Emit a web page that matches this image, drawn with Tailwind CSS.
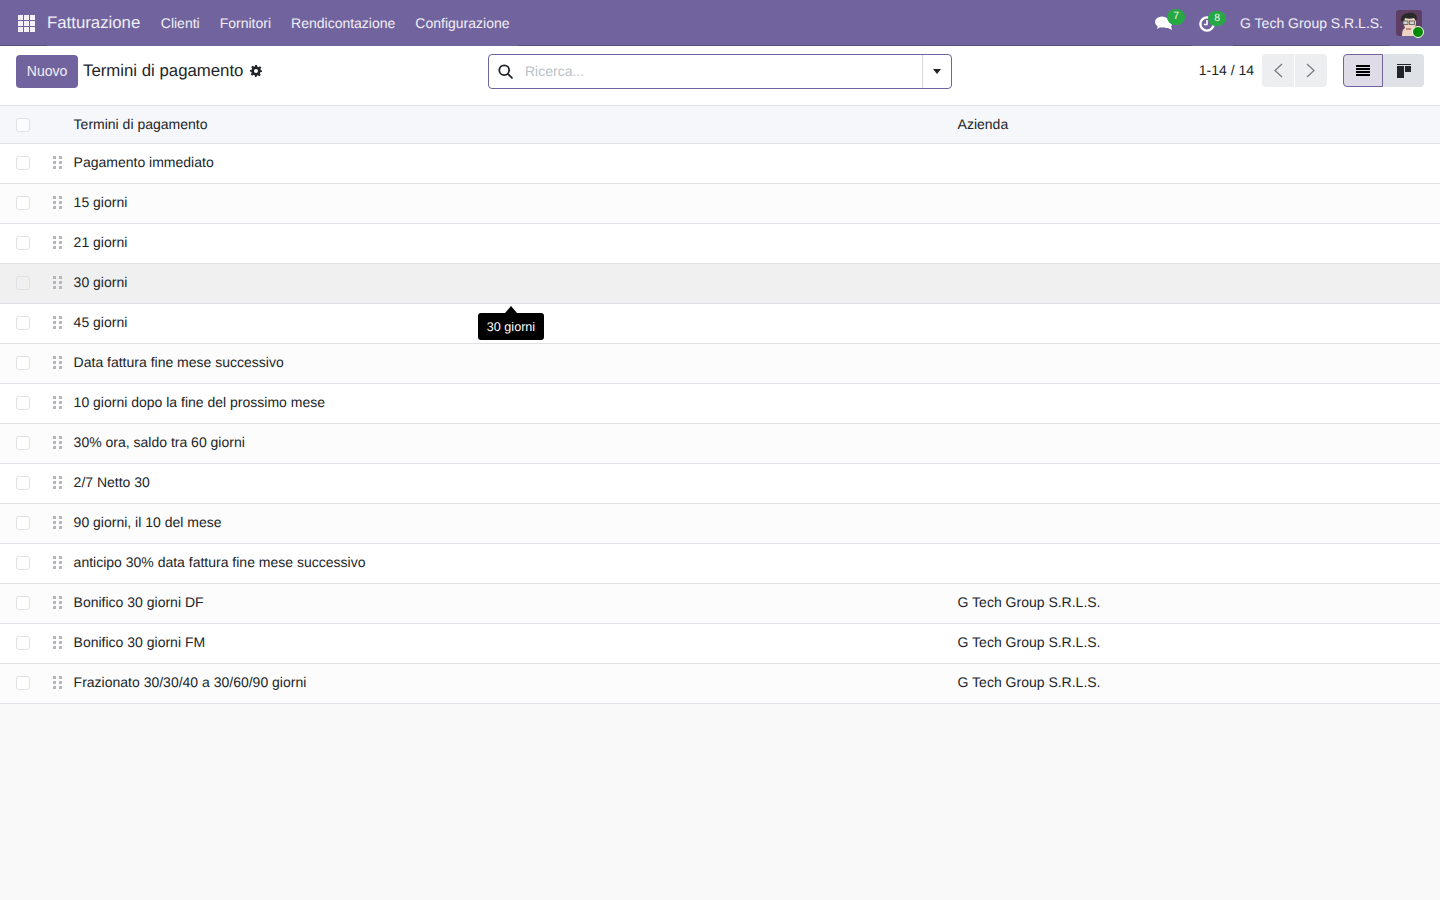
<!DOCTYPE html>
<html lang="en">
<head>
    <meta charset="UTF-8">
    <title>Termini di pagamento</title>
    <script src="https://cdn.jsdelivr.net/npm/@tailwindcss/browser@4"></script>
</head>
<body class="h-[900px] overflow-hidden bg-[#f9f9fa] font-['Liberation_Sans',sans-serif] text-[14px] text-[#212529] flex flex-col [text-rendering:geometricPrecision]">
    <nav class="h-[45px] pt-px shrink-0 bg-[#71639e] flex items-center text-white/90">
        <svg class="ml-[18px] w-[17px] h-[17px]" viewBox="0 0 17 17" fill="#f3f1f7">
            <rect x="0" y="0" width="5" height="5"/><rect x="6" y="0" width="5" height="5"/><rect x="12" y="0" width="5" height="5"/>
            <rect x="0" y="6" width="5" height="5"/><rect x="6" y="6" width="5" height="5"/><rect x="12" y="6" width="5" height="5"/>
            <rect x="0" y="12" width="5" height="5"/><rect x="6" y="12" width="5" height="5"/><rect x="12" y="12" width="5" height="5"/>
        </svg>
        <span class="ml-[12px] text-[16.8px]">Fatturazione</span>
        <a class="ml-[20.5px]">Clienti</a>
        <a class="ml-[20px]">Fornitori</a>
        <a class="ml-[20px]">Rendicontazione</a>
        <a class="ml-[20px]">Configurazione</a>
        <div class="ml-auto flex items-center">
            <div class="relative w-[18px] h-[16px]">
                <svg class="w-[18px] h-[16px]" viewBox="0 0 18 16" fill="#fff">
                    <ellipse cx="7" cy="7" rx="7" ry="5.5"/><path d="M3 10l-1 4 5-3z"/>
                    <path d="M12 12.5l5 2.5-1-4z" /><ellipse cx="12" cy="9.5" rx="5" ry="3.5"/>
                </svg>
                <span class="absolute left-[12px] top-[-6px] w-[18px] h-[16px] rounded-full bg-[#28a745] text-[10.5px] leading-[15px] text-center text-white/90">7</span>
            </div>
            <div class="relative w-[16px] h-[16px] ml-[26px] mt-px">
                <svg class="w-[16px] h-[16px]" viewBox="0 0 16 16" fill="none" stroke="#fff" stroke-width="2.4">
                    <circle cx="8" cy="8" r="6.6"/><path d="M8 4v4.5H5" stroke-width="1.6"/>
                </svg>
                <span class="absolute left-[9px] top-[-5px] w-[18px] h-[15px] rounded-full bg-[#28a745] text-[10.5px] leading-[14px] text-center text-white/90">8</span>
            </div>
            <span class="ml-[25px]">G Tech Group S.R.L.S.</span>
            <div class="relative ml-[13px] mr-[18px] w-[26px] h-[26px] rounded-[3px] bg-[#5e3f63]">
                <svg class="w-[26px] h-[26px] rounded-[3px]" viewBox="0 0 26 26">
                    <path d="M6 26c0-5 1-7 3-8l-2-6c0-4 3-6 7-6s6 3 6 7l-1 6c2 1 2 4 2 7z" fill="#eed3c2"/>
                    <path d="M5 11c-1-5 3-8 8-8 4-1 8 1 8 5l-1 3-2-3c-3 1-6 1-9 0l-1 4z" fill="#2b2a2a"/>
                    <rect x="7" y="11" width="5" height="3.5" fill="#cfd2cf" stroke="#555" stroke-width=".8"/>
                    <rect x="13.5" y="11" width="5" height="3.5" fill="#cfd2cf" stroke="#555" stroke-width=".8"/>
                    <path d="M10 19h5" stroke="#8a4a3c" stroke-width="1"/>
                </svg>
                <span class="absolute right-[-2px] bottom-[-2px] w-[12px] h-[12px] rounded-full bg-[#008a00] border border-white"></span>
            </div>
        </div>
    </nav>
    <div class="h-px shrink-0 bg-[#71639e] flex">
        <span class="w-[47px] bg-[#5b4f7f]"></span>
        <span class="ml-[471px] w-[674px] bg-[#5b4f7f]"></span>
        <span class="ml-[41px] w-[156px] bg-[#5b4f7f]"></span>
    </div>

    <div class="h-[60px] shrink-0 bg-white border-b border-[#dee2e6] flex items-start relative">
        <button class="ml-[16px] mt-[9px] w-[62px] h-[33px] rounded-[4px] bg-[#71639e] text-white/90">Nuovo</button>
        <span class="ml-[5px] mt-[15px] text-[16.8px] leading-[20px]">Termini di pagamento</span>
        <svg class="ml-[7px] mt-[19px] w-[12px] h-[12px]" viewBox="0 0 24 24" fill="#212529">
            <path fill-rule="evenodd" d="M10 0h4l.7 3.4 2.2.9 2.9-1.9 2.8 2.8-1.9 2.9.9 2.2L24 11v3l-3.4.7-.9 2.2 1.9 2.9-2.8 2.8-2.9-1.9-2.2.9L13 24h-3l-.7-3.4-2.2-.9-2.9 1.9-2.8-2.8 1.9-2.9-.9-2.2L0 13v-3l3.4-.7.9-2.2-1.9-2.9 2.8-2.8 2.9 1.9 2.2-.9zM12 8a4 4 0 1 0 0 8 4 4 0 0 0 0-8z"/>
        </svg>
        <div class="absolute left-[488px] top-[8px] w-[464px] h-[35px] rounded-[4px] border border-[#71639e] flex items-center">
            <svg class="ml-[9px] w-[15px] h-[15px]" viewBox="0 0 14 14" fill="none" stroke="#212529" stroke-width="1.7">
                <circle cx="5.8" cy="5.8" r="4.6"/><path d="M9.2 9.2L13 13" stroke-linecap="round"/>
            </svg>
            <span class="ml-[12px] text-[#bcc1c8]">Ricerca...</span>
            <div class="ml-auto w-[29px] h-full border-l border-[#d8dadd] flex items-center justify-center">
                <span class="w-0 h-0 border-x-[4.5px] border-x-transparent border-t-[5px] border-t-[#212529]"></span>
            </div>
        </div>
        <div class="ml-auto flex items-start pt-[8px]">
            <span class="mt-[8px] leading-[17px]">1-14 / 14</span>
            <div class="ml-[8px] flex h-[33px] rounded-[4px] overflow-hidden">
                <div class="w-[32px] bg-[#edeef0] flex items-center justify-center">
                    <svg class="w-[10px] h-[15px]" viewBox="0 0 10 15" fill="none" stroke="#7b7e82" stroke-width="1.3"><path d="M9 1L2 7.5 9 14"/></svg>
                </div>
                <div class="w-[32px] ml-px bg-[#edeef0] flex items-center justify-center">
                    <svg class="w-[10px] h-[15px]" viewBox="0 0 10 15" fill="none" stroke="#7b7e82" stroke-width="1.3"><path d="M1 1l7 6.5L1 14"/></svg>
                </div>
            </div>
            <div class="ml-[16px] mr-[16px] flex h-[33px]">
                <div class="w-[40px] rounded-l-[4px] bg-[#dfdce8] border border-[#71639e] flex flex-col items-center justify-center gap-[1px]">
                    <span class="w-[14px] h-[2px] bg-black"></span>
                    <span class="w-[14px] h-[2px] bg-black"></span>
                    <span class="w-[14px] h-[2px] bg-black"></span>
                    <span class="w-[14px] h-[2px] bg-black"></span>
                </div>
                <div class="w-[41px] rounded-r-[4px] bg-[#dee2e6] flex items-center justify-center">
                    <svg class="w-[14px] h-[14px]" viewBox="0 0 14 14" fill="#212529"><rect width="14" height="1"/><rect y="2" width="7" height="12"/><rect x="8" y="2" width="6" height="6"/></svg>
                </div>
            </div>
        </div>
    </div>

    <div class="bg-white shrink-0">
        <div class="h-[38px] bg-[#f6f7fa] border-b border-[#dee2e6] flex items-center">
            <span class="ml-[16px] w-[14px] h-[14px] rounded-[3px] border border-[#dee2e6] bg-white/60"></span>
            <span class="ml-[43.6px] w-[884px]">Termini di pagamento</span>
            <span>Azienda</span>
        </div>

        <!-- righe -->
        <div class="h-[40px] border-b border-[#dee2e6] flex items-center bg-white">
            <span class="ml-[16px] w-[14px] h-[14px] rounded-[3px] border border-[#dee2e6] bg-white -mt-[2px]"></span>
            <svg class="ml-[23px] w-[9px] h-[13px] -mt-[2px]" viewBox="0 0 9 13" fill="#b4b8bd"><rect width="3" height="3"/><rect x="6" width="3" height="3"/><rect y="5" width="3" height="3"/><rect x="6" y="5" width="3" height="3"/><rect y="10" width="3" height="3"/><rect x="6" y="10" width="3" height="3"/></svg>
            <span class="ml-[11.6px] w-[884px] -mt-[2px]">Pagamento immediato</span>
        </div>
        <div class="h-[40px] border-b border-[#dee2e6] flex items-center bg-[#fcfcfc]">
            <span class="ml-[16px] w-[14px] h-[14px] rounded-[3px] border border-[#dee2e6] bg-white -mt-[2px]"></span>
            <svg class="ml-[23px] w-[9px] h-[13px] -mt-[2px]" viewBox="0 0 9 13" fill="#b4b8bd"><rect width="3" height="3"/><rect x="6" width="3" height="3"/><rect y="5" width="3" height="3"/><rect x="6" y="5" width="3" height="3"/><rect y="10" width="3" height="3"/><rect x="6" y="10" width="3" height="3"/></svg>
            <span class="ml-[11.6px] w-[884px] -mt-[2px]">15 giorni</span>
        </div>
        <div class="h-[40px] border-b border-[#dee2e6] flex items-center bg-white">
            <span class="ml-[16px] w-[14px] h-[14px] rounded-[3px] border border-[#dee2e6] bg-white -mt-[2px]"></span>
            <svg class="ml-[23px] w-[9px] h-[13px] -mt-[2px]" viewBox="0 0 9 13" fill="#b4b8bd"><rect width="3" height="3"/><rect x="6" width="3" height="3"/><rect y="5" width="3" height="3"/><rect x="6" y="5" width="3" height="3"/><rect y="10" width="3" height="3"/><rect x="6" y="10" width="3" height="3"/></svg>
            <span class="ml-[11.6px] w-[884px] -mt-[2px]">21 giorni</span>
        </div>
        <div class="h-[40px] border-b border-[#dee2e6] flex items-center bg-[#f0f0f0]">
            <span class="ml-[16px] w-[14px] h-[14px] rounded-[3px] border border-[#dee2e6] bg-[#f0f0f0] -mt-[2px]"></span>
            <svg class="ml-[23px] w-[9px] h-[13px] -mt-[2px]" viewBox="0 0 9 13" fill="#b4b8bd"><rect width="3" height="3"/><rect x="6" width="3" height="3"/><rect y="5" width="3" height="3"/><rect x="6" y="5" width="3" height="3"/><rect y="10" width="3" height="3"/><rect x="6" y="10" width="3" height="3"/></svg>
            <span class="ml-[11.6px] w-[884px] -mt-[2px]">30 giorni</span>
        </div>
        <div class="h-[40px] border-b border-[#dee2e6] flex items-center bg-white">
            <span class="ml-[16px] w-[14px] h-[14px] rounded-[3px] border border-[#dee2e6] bg-white -mt-[2px]"></span>
            <svg class="ml-[23px] w-[9px] h-[13px] -mt-[2px]" viewBox="0 0 9 13" fill="#b4b8bd"><rect width="3" height="3"/><rect x="6" width="3" height="3"/><rect y="5" width="3" height="3"/><rect x="6" y="5" width="3" height="3"/><rect y="10" width="3" height="3"/><rect x="6" y="10" width="3" height="3"/></svg>
            <span class="ml-[11.6px] w-[884px] -mt-[2px]">45 giorni</span>
        </div>
        <div class="h-[40px] border-b border-[#dee2e6] flex items-center bg-[#fcfcfc]">
            <span class="ml-[16px] w-[14px] h-[14px] rounded-[3px] border border-[#dee2e6] bg-white -mt-[2px]"></span>
            <svg class="ml-[23px] w-[9px] h-[13px] -mt-[2px]" viewBox="0 0 9 13" fill="#b4b8bd"><rect width="3" height="3"/><rect x="6" width="3" height="3"/><rect y="5" width="3" height="3"/><rect x="6" y="5" width="3" height="3"/><rect y="10" width="3" height="3"/><rect x="6" y="10" width="3" height="3"/></svg>
            <span class="ml-[11.6px] w-[884px] -mt-[2px]">Data fattura fine mese successivo</span>
        </div>
        <div class="h-[40px] border-b border-[#dee2e6] flex items-center bg-white">
            <span class="ml-[16px] w-[14px] h-[14px] rounded-[3px] border border-[#dee2e6] bg-white -mt-[2px]"></span>
            <svg class="ml-[23px] w-[9px] h-[13px] -mt-[2px]" viewBox="0 0 9 13" fill="#b4b8bd"><rect width="3" height="3"/><rect x="6" width="3" height="3"/><rect y="5" width="3" height="3"/><rect x="6" y="5" width="3" height="3"/><rect y="10" width="3" height="3"/><rect x="6" y="10" width="3" height="3"/></svg>
            <span class="ml-[11.6px] w-[884px] -mt-[2px]">10 giorni dopo la fine del prossimo mese</span>
        </div>
        <div class="h-[40px] border-b border-[#dee2e6] flex items-center bg-[#fcfcfc]">
            <span class="ml-[16px] w-[14px] h-[14px] rounded-[3px] border border-[#dee2e6] bg-white -mt-[2px]"></span>
            <svg class="ml-[23px] w-[9px] h-[13px] -mt-[2px]" viewBox="0 0 9 13" fill="#b4b8bd"><rect width="3" height="3"/><rect x="6" width="3" height="3"/><rect y="5" width="3" height="3"/><rect x="6" y="5" width="3" height="3"/><rect y="10" width="3" height="3"/><rect x="6" y="10" width="3" height="3"/></svg>
            <span class="ml-[11.6px] w-[884px] -mt-[2px]">30% ora, saldo tra 60 giorni</span>
        </div>
        <div class="h-[40px] border-b border-[#dee2e6] flex items-center bg-white">
            <span class="ml-[16px] w-[14px] h-[14px] rounded-[3px] border border-[#dee2e6] bg-white -mt-[2px]"></span>
            <svg class="ml-[23px] w-[9px] h-[13px] -mt-[2px]" viewBox="0 0 9 13" fill="#b4b8bd"><rect width="3" height="3"/><rect x="6" width="3" height="3"/><rect y="5" width="3" height="3"/><rect x="6" y="5" width="3" height="3"/><rect y="10" width="3" height="3"/><rect x="6" y="10" width="3" height="3"/></svg>
            <span class="ml-[11.6px] w-[884px] -mt-[2px]">2/7 Netto 30</span>
        </div>
        <div class="h-[40px] border-b border-[#dee2e6] flex items-center bg-[#fcfcfc]">
            <span class="ml-[16px] w-[14px] h-[14px] rounded-[3px] border border-[#dee2e6] bg-white -mt-[2px]"></span>
            <svg class="ml-[23px] w-[9px] h-[13px] -mt-[2px]" viewBox="0 0 9 13" fill="#b4b8bd"><rect width="3" height="3"/><rect x="6" width="3" height="3"/><rect y="5" width="3" height="3"/><rect x="6" y="5" width="3" height="3"/><rect y="10" width="3" height="3"/><rect x="6" y="10" width="3" height="3"/></svg>
            <span class="ml-[11.6px] w-[884px] -mt-[2px]">90 giorni, il 10 del mese</span>
        </div>
        <div class="h-[40px] border-b border-[#dee2e6] flex items-center bg-white">
            <span class="ml-[16px] w-[14px] h-[14px] rounded-[3px] border border-[#dee2e6] bg-white -mt-[2px]"></span>
            <svg class="ml-[23px] w-[9px] h-[13px] -mt-[2px]" viewBox="0 0 9 13" fill="#b4b8bd"><rect width="3" height="3"/><rect x="6" width="3" height="3"/><rect y="5" width="3" height="3"/><rect x="6" y="5" width="3" height="3"/><rect y="10" width="3" height="3"/><rect x="6" y="10" width="3" height="3"/></svg>
            <span class="ml-[11.6px] w-[884px] -mt-[2px]">anticipo 30% data fattura fine mese successivo</span>
        </div>
        <div class="h-[40px] border-b border-[#dee2e6] flex items-center bg-[#fcfcfc]">
            <span class="ml-[16px] w-[14px] h-[14px] rounded-[3px] border border-[#dee2e6] bg-white -mt-[2px]"></span>
            <svg class="ml-[23px] w-[9px] h-[13px] -mt-[2px]" viewBox="0 0 9 13" fill="#b4b8bd"><rect width="3" height="3"/><rect x="6" width="3" height="3"/><rect y="5" width="3" height="3"/><rect x="6" y="5" width="3" height="3"/><rect y="10" width="3" height="3"/><rect x="6" y="10" width="3" height="3"/></svg>
            <span class="ml-[11.6px] w-[884px] -mt-[2px]">Bonifico 30 giorni DF</span>
            <span class="-mt-[2px]">G Tech Group S.R.L.S.</span>
        </div>
        <div class="h-[40px] border-b border-[#dee2e6] flex items-center bg-white">
            <span class="ml-[16px] w-[14px] h-[14px] rounded-[3px] border border-[#dee2e6] bg-white -mt-[2px]"></span>
            <svg class="ml-[23px] w-[9px] h-[13px] -mt-[2px]" viewBox="0 0 9 13" fill="#b4b8bd"><rect width="3" height="3"/><rect x="6" width="3" height="3"/><rect y="5" width="3" height="3"/><rect x="6" y="5" width="3" height="3"/><rect y="10" width="3" height="3"/><rect x="6" y="10" width="3" height="3"/></svg>
            <span class="ml-[11.6px] w-[884px] -mt-[2px]">Bonifico 30 giorni FM</span>
            <span class="-mt-[2px]">G Tech Group S.R.L.S.</span>
        </div>
        <div class="h-[40px] border-b border-[#dee2e6] flex items-center bg-[#fcfcfc]">
            <span class="ml-[16px] w-[14px] h-[14px] rounded-[3px] border border-[#dee2e6] bg-white -mt-[2px]"></span>
            <svg class="ml-[23px] w-[9px] h-[13px] -mt-[2px]" viewBox="0 0 9 13" fill="#b4b8bd"><rect width="3" height="3"/><rect x="6" width="3" height="3"/><rect y="5" width="3" height="3"/><rect x="6" y="5" width="3" height="3"/><rect y="10" width="3" height="3"/><rect x="6" y="10" width="3" height="3"/></svg>
            <span class="ml-[11.6px] w-[884px] -mt-[2px]">Frazionato 30/30/40 a 30/60/90 giorni</span>
            <span class="-mt-[2px]">G Tech Group S.R.L.S.</span>
        </div>
    </div>

    <!-- tooltip -->
    <div class="absolute left-[478px] top-[313px] h-[27px] w-[66px] rounded-[3px] bg-black text-white text-[12.6px] leading-[28px] text-center">
        30 giorni
        <span class="absolute left-[27px] top-[-7px] w-0 h-0 border-x-[6px] border-x-transparent border-b-[7px] border-b-black"></span>
    </div>
</body>
</html>
